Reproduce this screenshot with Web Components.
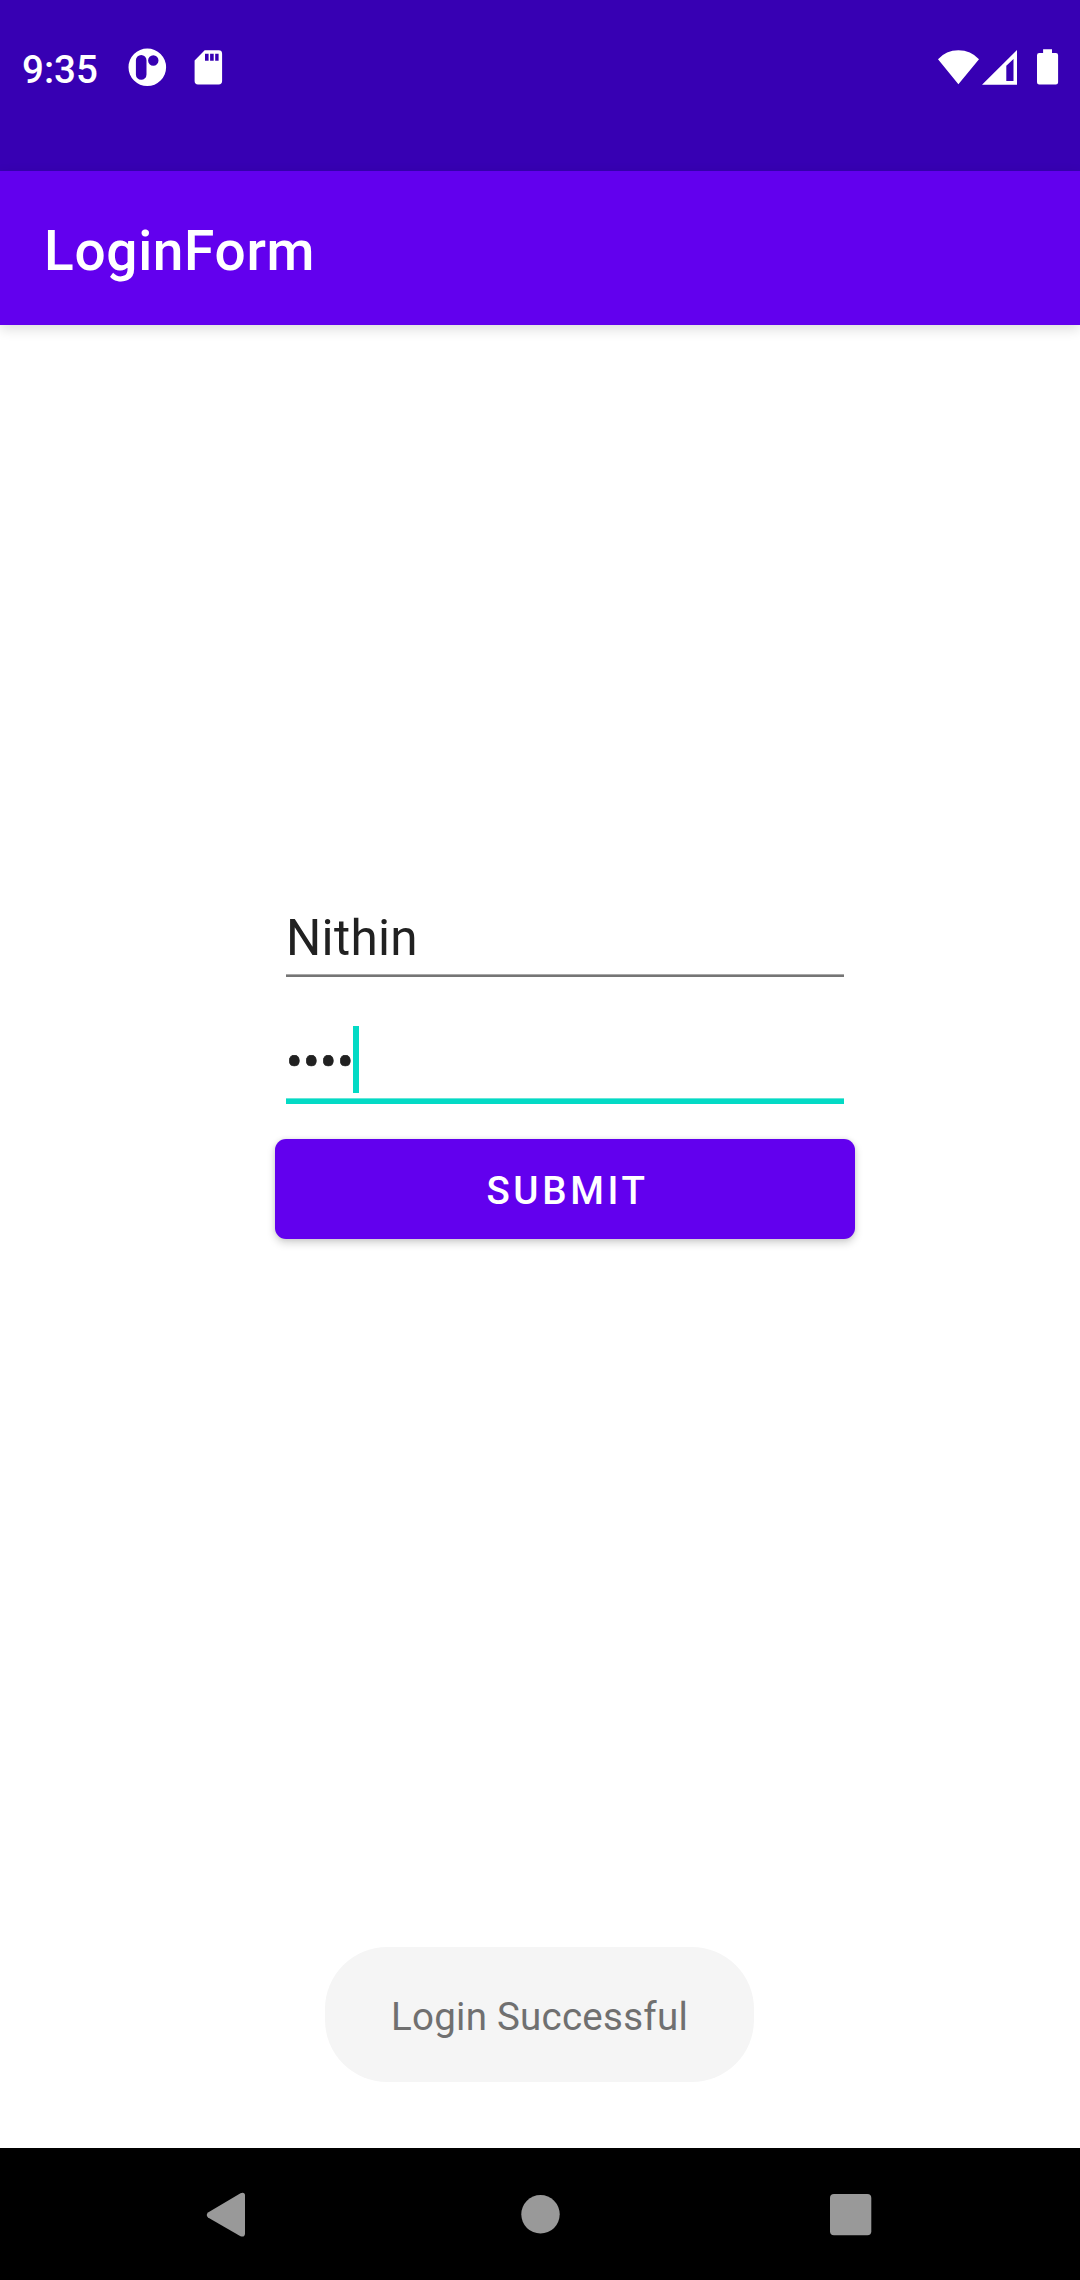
<!DOCTYPE html>
<html lang="en"><head><meta charset="utf-8"><title>LoginForm</title>
<style>html,body{margin:0;background:#fff}body{width:1080px;height:2280px;overflow:hidden;font-family:Roboto,sans-serif}</style></head>
<body>
<login-screen></login-screen>
<script>
function define(name, html) {
  const t = document.createElement('template');
  t.innerHTML = html;
  customElements.define(name, class extends HTMLElement {
    constructor() {
      super();
      this.attachShadow({mode: 'open'}).append(t.content.cloneNode(true));
    }
  });
}
define('status-bar', `<style>
:host{display:flex;height:171px;background:#3700b3;color:#fff;box-sizing:border-box;padding:47px 21px 0 22px;justify-content:space-between;align-items:flex-start}
div{display:flex}
span{font-size:38.5px;font-weight:500;line-height:46px;width:104px}
svg{display:block;fill:#fff}
</style>
<div><span>9:35</span>
<svg width="110" height="44" viewBox="126 47 110 44"><path fill-rule="evenodd" d="M147.3 48.5a18.8 18.8 0 1 0 0 37.6a18.8 18.8 0 1 0 0-37.6zM141.2 55a5.3 5.3 0 0 1 5.3 5.3v14.2a5.3 5.3 0 0 1-10.6 0v-14.2a5.3 5.3 0 0 1 5.3-5.3zM153.3 55.3a5.2 5.2 0 1 0 0 10.4a5.2 5.2 0 1 0 0-10.4z"/><path fill-rule="evenodd" d="M204.7 50.3H218.700a3.400 3.400 0 0 1 3.400 3.400V81a3.400 3.400 0 0 1-3.400 3.400H198a3.400 3.400 0 0 1-3.400-3.400V60.500zM205 53.700v7h3.600v-7zM210.100 53.700v7h3.600v-7zM215.200 53.700v7h3.400v-7z"/></svg></div>
<svg width="122" height="44" viewBox="937 47 122 44"><path d="M938 59.300Q946 50.300 958.400 50.300T979 59.300L958.400 84.300zM1037 55.200q0-2.200 2.200-2.200h3.900v-3.800h8.900v3.800h3.900q2.200 0 2.200 2.200v27q0 2.200-2.200 2.200h-16.700q-2.200 0-2.200-2.200z"/><path fill-rule="evenodd" d="M982 84.700L1017 50V84.700zM1006.300 65.700V81H1013.500V59z"/></svg>`);
define('app-bar', `<style>
:host{display:block;height:154px;background:#6200ee;color:#fff;font-size:55px;font-weight:500;line-height:160px;letter-spacing:.68px;padding-left:44px;box-sizing:border-box;box-shadow:0 4px 12px rgba(0,0,0,.14);position:relative}
</style><slot></slot>`);
define('text-field', `<style>
:host{display:flex;flex-direction:column;height:124px;margin:0 11px;font-size:49.5px;letter-spacing:.3px;color:#212121}
.value{display:flex;align-items:center;height:67px;line-height:67px}
.text{padding-top:2px}
:host([focused]) .text{-webkit-text-stroke:.7px #212121}
.caret{width:6px;height:67px;margin:-4px 0 0 -1px;background:#03dac5;display:none}
.line{height:3px;margin-top:3px;background:linear-gradient(#a8a8a8 0 1px,#757575 1px)}
:host([focused]) .caret{display:block}
:host([focused]) .line{height:6px;background:linear-gradient(#64e6d8 0 1px,#03dac5 1px)}
</style><div class="value"><div class="text"><slot></slot></div><div class="caret"></div></div><div class="line"></div>`);
define('submit-button', `<style>
:host{display:block}
button{display:block;width:100%;height:100px;border:0;border-radius:11px;background:#6200ee;color:#fff;font:500 38.5px/103px Roboto,sans-serif;letter-spacing:3.65px;text-indent:5px;padding:0;box-shadow:0 4px 8px rgba(0,0,0,.18),0 0 5px rgba(0,0,0,.09)}
</style><button><slot></slot></button>`);
define('toast-message', `<style>
:host{display:block;width:429px;height:135px;box-sizing:border-box;border-radius:62px;background:#f5f5f5;color:#707070;font-size:38.5px;letter-spacing:.25px;line-height:139px;text-align:center;white-space:nowrap}
</style><slot></slot>`);
define('nav-bar', `<style>
:host{display:flex;height:132px;background:#000;align-items:center;justify-content:space-between;padding:2px 208px 0 206px;box-sizing:border-box}
svg{fill:#999;display:block}
</style>
<svg width="41" height="46" viewBox="0 0 41 46"><path d="M2 20.500L34.500 1.200Q39-.100 39 3.500V41.500Q39 45.500 34.500 44.300L2 25.500Q-.500 23 2 20.500z"/></svg>
<svg width="42" height="42"><circle cx="22.500" cy="20.300" r="19.200"/></svg>
<svg width="42" height="42"><rect width="41.300" height="41.300" rx="4"/></svg>`);
define('login-screen', `<style>
:host{display:flex;flex-direction:column;width:1080px;height:2280px;background:#fff}
main{flex:1;display:flex;flex-direction:column;justify-content:space-between;padding:579px 0 66px}
form{width:580px;margin-left:275px}
toast-message{margin-left:325px}
submit-button{margin-top:-13px}
</style>
<status-bar></status-bar><app-bar>LoginForm</app-bar>
<main><form onsubmit="return false"><text-field>Nithin</text-field><text-field focused>••••</text-field><submit-button>SUBMIT</submit-button></form>
<toast-message>Login Successful</toast-message></main><nav-bar></nav-bar>`);
</script></body></html>
